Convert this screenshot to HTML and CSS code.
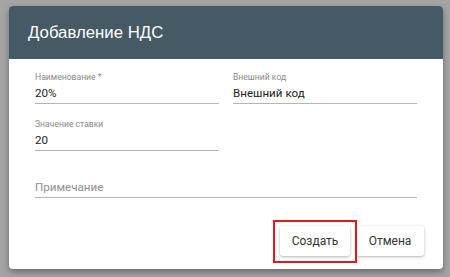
FILE: index.html
```html
<!DOCTYPE html>
<html lang="ru">
<head>
<meta charset="utf-8">
<link rel="stylesheet" href="styles.css">
</head>
<body>
<div class="dialog">
  <div class="header"><h1 class="title">Добавление НДС</h1></div>
  <div class="content">
    <div class="grid">
      <div class="field">
        <div class="label">Наименование *</div>
        <div class="value">20%</div>
      </div>
      <div class="field">
        <div class="label">Внешний код</div>
        <div class="value">Внешний код</div>
      </div>
      <div class="field">
        <div class="label">Значение ставки</div>
        <div class="value">20</div>
      </div>
      <div></div>
      <div class="field wide">
        <div class="label"></div>
        <div class="value placeholder">Примечание</div>
      </div>
    </div>
    <div class="actions">
      <div class="btn-wrap">
        <button class="btn">Создать</button>
        <span class="highlight"></span>
      </div>
      <button class="btn">Отмена</button>
    </div>
  </div>
</div>
</body>
</html>
```
FILE: styles.css
```css
html, body {
  margin: 0;
  padding: 0;
}
body {
  background: #a4a4a4;
  width: 450px;
  height: 277px;
  overflow: hidden;
  font-family: Roboto, "Liberation Sans", sans-serif;
}
.dialog {
  margin: 6px 0 0 9px;
  width: 434px;
  height: 263px;
  background: #ffffff;
  border-radius: 4px;
  overflow: hidden;
  box-shadow: 0 3px 6px rgba(0,0,0,0.35);
  display: flex;
  flex-direction: column;
}
.header {
  height: 53px;
  background: #455a64;
  display: flex;
  align-items: center;
  padding-left: 19px;
  flex-shrink: 0;
}
.title {
  margin: 0;
  font-family: "Liberation Sans", Arial, sans-serif;
  font-weight: normal;
  font-size: 16.8px;
  color: #ffffff;
  padding-top: 1px;
}
.content {
  flex: 1;
  padding: 0 19px 13px 26px;
  display: flex;
  flex-direction: column;
}
.grid {
  display: grid;
  grid-template-columns: 184px 184px;
  column-gap: 14px;
  row-gap: 2px;
  width: 382px;
}
.field {
  height: 45px;
  display: flex;
  flex-direction: column;
  justify-content: flex-end;
}
.field.wide {
  grid-column: 1 / span 2;
}
.label {
  font-size: 8.6px;
  line-height: 11px;
  color: #8a8a8a;
  height: 11px;
}
.value {
  font-size: 11.6px;
  line-height: 16px;
  color: #222222;
  padding: 2px 0 2px;
  border-bottom: 1px solid #b5b5b5;
}
.value.placeholder {
  color: #8f8f8f;
}
.actions {
  margin-top: auto;
  display: flex;
  justify-content: flex-end;
  gap: 6px;
}
.btn-wrap {
  position: relative;
  display: flex;
}
.btn {
  height: 30px;
  border: none;
  background: #ffffff;
  border-radius: 3px;
  box-shadow: 0 1px 3px rgba(0,0,0,0.3);
  font-family: Roboto, "Liberation Sans", sans-serif;
  font-size: 12px;
  color: #333333;
  padding: 0;
  width: 70px;
}
.actions > .btn {
  width: 68px;
}
.highlight {
  position: absolute;
  left: -7px;
  top: -6px;
  width: 80px;
  height: 39px;
  border: 2px solid #e8141c;
  pointer-events: none;
}
```
